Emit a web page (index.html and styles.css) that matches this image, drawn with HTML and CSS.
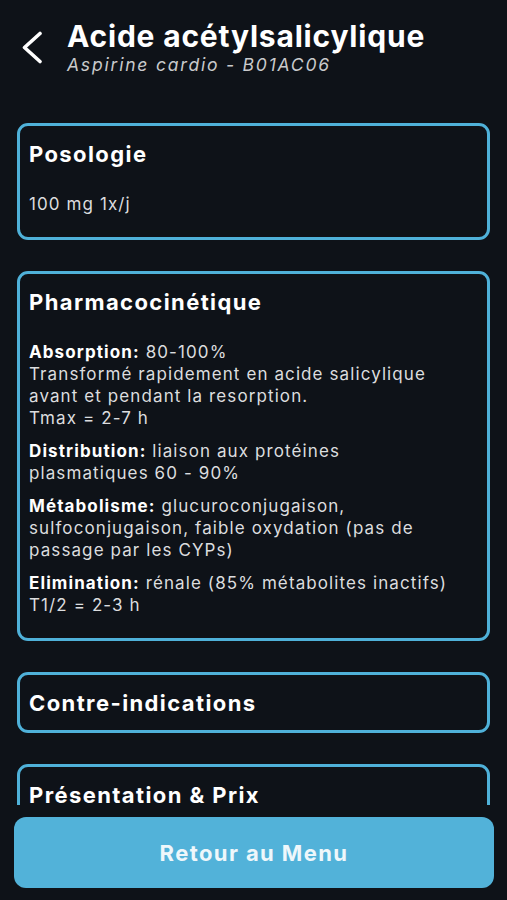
FILE: index.html
```html
<!DOCTYPE html>
<html lang="fr">
<head>
    <meta charset="UTF-8">
    <title>Acide acétylsalicylique</title>
    <link rel="stylesheet" href="styles.css">
</head>
<body>
    <div class="screen">
        <header class="header">
            <button class="back" aria-label="Retour">
                <svg width="22" height="33" viewBox="0 0 22 33" fill="none">
                    <path d="M19 2.5 L3.5 16.5 L19 30.5" stroke="#ffffff" stroke-width="3.6" stroke-linecap="round" stroke-linejoin="round"/>
                </svg>
            </button>
            <div class="header-text">
                <h1 class="title">Acide acétylsalicylique</h1>
                <p class="subtitle">Aspirine cardio - B01AC06</p>
            </div>
        </header>

        <main class="content">
            <section class="card">
                <h2 class="card-title">Posologie</h2>
                <p class="card-text">100 mg 1x/j</p>
            </section>

            <section class="card card-long">
                <h2 class="card-title">Pharmacocinétique</h2>
                <p class="card-text"><b>Absorption:</b> 80-100%<br>Transformé rapidement en acide salicylique avant et pendant la resorption.<br>Tmax = 2-7 h</p>
                <p class="card-text"><b>Distribution:</b> liaison aux protéines plasmatiques 60 - 90%</p>
                <p class="card-text"><b>Métabolisme:</b> glucuroconjugaison, sulfoconjugaison, faible oxydation (pas de passage par les CYPs)</p>
                <p class="card-text"><b>Elimination:</b> rénale (85% métabolites inactifs)<br>T1/2 = 2-3 h</p>
            </section>

            <section class="card card-closed">
                <h2 class="card-title">Contre-indications</h2>
            </section>

            <section class="card card-closed">
                <h2 class="card-title">Présentation &amp; Prix</h2>
            </section>
        </main>

        <footer class="footer">
            <button class="btn-menu">Retour au Menu</button>
        </footer>
    </div>
</body>
</html>
```

FILE: styles.css
```css
:root {
    --background-color: #0e1218;
    --accent-color: #4fb1d9;
    --button-color: #52b2d9;
    --text-color: #dcdddf;
    --title-color: #ffffff;
}
* {
    margin: 0;
    padding: 0;
    box-sizing: border-box;
}
body {
    font-family: Inter, "Noto Sans", Arial, sans-serif;
    background-color: var(--background-color);
    color: var(--text-color);
}
.screen {
    height: 900px;
    display: flex;
    flex-direction: column;
}
.header {
    display: flex;
    align-items: flex-start;
    padding: 18px 0 0 21px;
    height: 110px;
}
.back {
    background: none;
    border: none;
    width: 22px;
    height: 33px;
    margin-top: 13px;
    margin-right: 24px;
    cursor: pointer;
}
.title {
    color: var(--title-color);
    font-size: 30px;
    font-weight: 700;
    line-height: 36px;
    letter-spacing: 0.8px;
}
.subtitle {
    font-style: italic;
    font-size: 17.5px;
    line-height: 22px;
    letter-spacing: 1.8px;
    color: #c9cacc;
}
.content {
    height: 695px;
    overflow: hidden;
    padding: 13px 17px 0 17px;
    display: flex;
    flex-direction: column;
    gap: 31px;
}
.card {
    flex-shrink: 0;
    border: 3px solid var(--accent-color);
    border-radius: 11px;
    padding: 14px 9px 22px 9px;
}
.card-long {
    padding-right: 32px;
}
.card-closed {
    padding-bottom: 13px;
}
.card-title {
    color: var(--title-color);
    font-size: 22px;
    font-weight: 700;
    line-height: 28px;
    letter-spacing: 1.4px;
    margin-bottom: 25px;
}
.card-closed .card-title {
    margin-bottom: 0;
}
.card-text {
    font-size: 17px;
    line-height: 22px;
    letter-spacing: 1.1px;
    margin-bottom: 11px;
}
.card-text:last-child {
    margin-bottom: 0;
}
.card-text b {
    color: var(--title-color);
    font-weight: 700;
}
.footer {
    padding: 12px 13px 0 14px;
}
.btn-menu {
    width: 100%;
    height: 71px;
    border: none;
    border-radius: 12px;
    background-color: var(--button-color);
    color: #eef7fb;
    font-family: Inter, "Noto Sans", Arial, sans-serif;
    font-size: 22px;
    font-weight: 700;
    letter-spacing: 1.4px;
    cursor: pointer;
}
```
